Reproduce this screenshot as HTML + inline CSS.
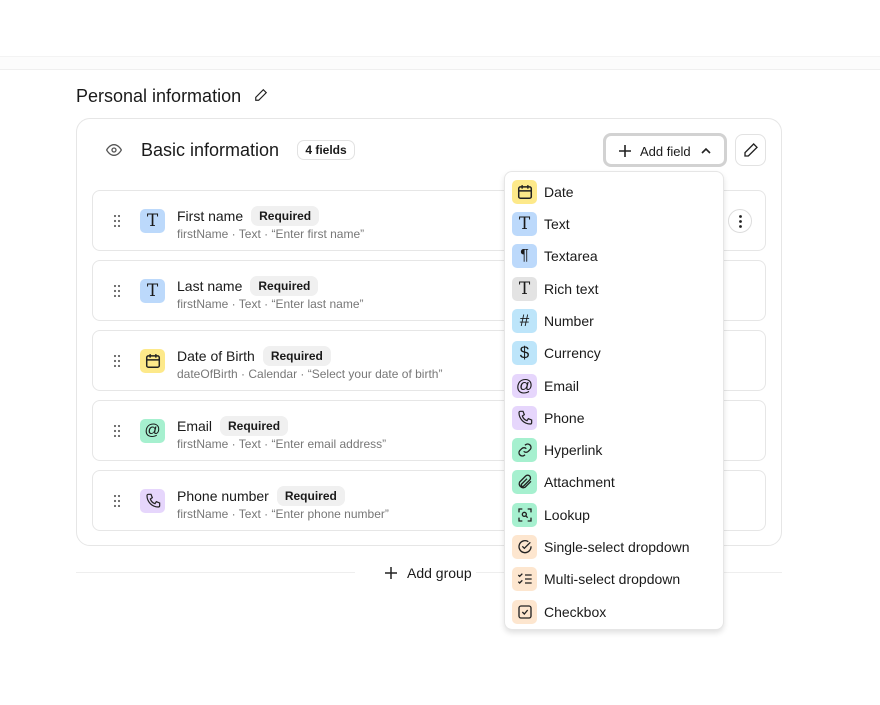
<!DOCTYPE html>
<html><head><meta charset="utf-8"><style>
*{box-sizing:border-box;margin:0;padding:0}
body{width:880px;height:705px;background:#fff;font-family:"Liberation Sans",sans-serif;color:#1a1a1a;position:relative;overflow:hidden}
.a{position:absolute}
.band{left:0;top:56px;width:880px;height:14px;background:#fcfcfc;border-top:1px solid #f3f3f3;border-bottom:1px solid #efefef}
.card{left:76px;top:118px;width:706px;height:428px;border:1px solid #e6e6e6;border-radius:14px}
.row{left:92px;width:674px;height:61px;border:1px solid #e6e6e6;border-radius:8px;background:#fff}
.dots{left:21px;top:24px;width:6px;height:12px}
.ic{width:25px;height:24px;border-radius:5px;display:flex;align-items:center;justify-content:center}
.row .ic{position:absolute;left:47px;top:18px}
.t{position:absolute;left:84px;top:15px;font-size:14px;display:flex;align-items:center}
.req{margin-left:8px;background:#f0f0f0;border-radius:7px;font-size:12px;font-weight:bold;padding:3px 8px}
.s{position:absolute;left:84px;top:36px;font-size:12px;color:#777}
.menu{left:504px;top:171px;width:220px;height:459px;background:#fff;border:1px solid #e6e6e6;border-radius:8px;box-shadow:0 3px 6px rgba(0,0,0,.12)}
.mi{position:absolute;left:7px;height:25px;display:flex;align-items:center;font-size:14px}
.mi .ic{margin-right:7px}
.y{background:#fde98a}.b{background:#bcd9fb}.g{background:#e3e3e3}.c{background:#bde5fa}.p{background:#e6d6fc}.gr{background:#a6f0cf}.o{background:#fde6cf}
.T{font-family:"DejaVu Serif",serif;font-size:17px;font-weight:normal}
svg{display:block}
</style></head><body>
<div class="a band"></div>
<div class="a" style="left:76px;top:86px;font-size:18px">Personal information</div>
<svg class="a" style="left:254px;top:88px" width="14" height="14" viewBox="0 0 24 24" fill="none" stroke="#222" stroke-width="2"><path d="M16 3l5 5L8 21H3v-5z"/></svg>
<div class="a card"></div>
<svg class="a" style="left:106px;top:143px" width="16" height="14" viewBox="0 0 24 20" fill="none" stroke="#555" stroke-width="2"><path d="M1 10s4-8 11-8 11 8 11 8-4 8-11 8S1 10 1 10z"/><circle cx="12" cy="10" r="3"/></svg>
<div class="a" style="left:141px;top:140px;font-size:18px">Basic information</div>
<div class="a" style="left:297px;top:140px;width:58px;height:20px;border:1px solid #e2e2e2;border-radius:7px;font-size:12px;font-weight:bold;text-align:center;line-height:18px">4 fields</div>
<div class="a" style="left:603px;top:133px;width:124px;height:34px;border:3px solid #d2d2d2;border-radius:8px;background:#fff;font-size:13px">
<svg class="a" style="left:12px;top:8px" width="14" height="14" viewBox="0 0 14 14" stroke="#222" stroke-width="1.6"><path d="M7 1v12M1 7h12"/></svg>
<span class="a" style="left:34px;top:8px">Add field</span>
<svg class="a" style="left:94px;top:10px" width="12" height="10" viewBox="0 0 12 10" fill="none" stroke="#222" stroke-width="1.6"><path d="M2 7l4-4 4 4"/></svg></div>
<div class="a" style="left:735px;top:134px;width:31px;height:32px;border:1px solid #e2e2e2;border-radius:8px">
<svg class="a" style="left:7px;top:7px" width="16" height="16" viewBox="0 0 24 24" fill="none" stroke="#222" stroke-width="2"><path d="M16 3l5 5L8 21H3v-5z"/></svg></div>

<div class="a row" style="top:190px">
<svg class="a dots" viewBox="0 0 6 12" fill="#666"><circle cx="1" cy="1" r="1.1"/><circle cx="5" cy="1" r="1.1"/><circle cx="1" cy="6" r="1.1"/><circle cx="5" cy="6" r="1.1"/><circle cx="1" cy="11" r="1.1"/><circle cx="5" cy="11" r="1.1"/></svg>
<div class="ic b"><span class="T">T</span></div>
<div class="t">First name<span class="req">Required</span></div><div class="s">firstName · Text · “Enter first name”</div>
<div class="a" style="left:635px;top:18px;width:24px;height:24px;border:1px solid #ddd;border-radius:12px"><svg class="a" style="left:10px;top:5px" width="3" height="13" viewBox="0 0 3 13" fill="#222"><circle cx="1.5" cy="1.5" r="1.4"/><circle cx="1.5" cy="6.5" r="1.4"/><circle cx="1.5" cy="11.5" r="1.4"/></svg></div>
</div>
<div class="a row" style="top:260px">
<svg class="a dots" viewBox="0 0 6 12" fill="#666"><circle cx="1" cy="1" r="1.1"/><circle cx="5" cy="1" r="1.1"/><circle cx="1" cy="6" r="1.1"/><circle cx="5" cy="6" r="1.1"/><circle cx="1" cy="11" r="1.1"/><circle cx="5" cy="11" r="1.1"/></svg>
<div class="ic b"><span class="T">T</span></div>
<div class="t">Last name<span class="req">Required</span></div><div class="s">firstName · Text · “Enter last name”</div></div>
<div class="a row" style="top:330px">
<svg class="a dots" viewBox="0 0 6 12" fill="#666"><circle cx="1" cy="1" r="1.1"/><circle cx="5" cy="1" r="1.1"/><circle cx="1" cy="6" r="1.1"/><circle cx="5" cy="6" r="1.1"/><circle cx="1" cy="11" r="1.1"/><circle cx="5" cy="11" r="1.1"/></svg>
<div class="ic y"><svg width="16" height="16" viewBox="0 0 14 14" fill="none" stroke="#222" stroke-width="1.3"><rect x="1.5" y="2.5" width="11" height="10" rx="1.5"/><path d="M1.5 6h11M4.5 1v3M9.5 1v3"/></svg></div>
<div class="t">Date of Birth<span class="req">Required</span></div><div class="s">dateOfBirth · Calendar · “Select your date of birth”</div></div>
<div class="a row" style="top:400px">
<svg class="a dots" viewBox="0 0 6 12" fill="#666"><circle cx="1" cy="1" r="1.1"/><circle cx="5" cy="1" r="1.1"/><circle cx="1" cy="6" r="1.1"/><circle cx="5" cy="6" r="1.1"/><circle cx="1" cy="11" r="1.1"/><circle cx="5" cy="11" r="1.1"/></svg>
<div class="ic gr"><span style="font-size:16px">@</span></div>
<div class="t">Email<span class="req">Required</span></div><div class="s">firstName · Text · “Enter email address”</div></div>
<div class="a row" style="top:470px">
<svg class="a dots" viewBox="0 0 6 12" fill="#666"><circle cx="1" cy="1" r="1.1"/><circle cx="5" cy="1" r="1.1"/><circle cx="1" cy="6" r="1.1"/><circle cx="5" cy="6" r="1.1"/><circle cx="1" cy="11" r="1.1"/><circle cx="5" cy="11" r="1.1"/></svg>
<div class="ic p"><svg width="16" height="16" viewBox="0 0 24 24" fill="none" stroke="#222" stroke-width="1.8"><path d="M5 2h4l2 5-3 2a11 11 0 0 0 7 7l2-3 5 2v4a2 2 0 0 1-2 2A17 17 0 0 1 3 4a2 2 0 0 1 2-2z"/></svg></div>
<div class="t">Phone number<span class="req">Required</span></div><div class="s">firstName · Text · “Enter phone number”</div></div>

<div class="a" style="left:76px;top:572px;width:279px;height:1px;background:#eee"></div>
<div class="a" style="left:476px;top:572px;width:306px;height:1px;background:#eee"></div>
<svg class="a" style="left:385px;top:567px" width="12" height="12" viewBox="0 0 12 12" stroke="#222" stroke-width="1.5"><path d="M6 0v12M0 6h12"/></svg>
<div class="a" style="left:407px;top:565px;font-size:14px">Add group</div>

<div class="a menu">
<div class="mi" style="top:7px"><div class="ic y"><svg width="16" height="16" viewBox="0 0 14 14" fill="none" stroke="#222" stroke-width="1.3"><rect x="1.5" y="2.5" width="11" height="10" rx="1.5"/><path d="M1.5 6h11M4.5 1v3M9.5 1v3"/></svg></div>Date</div>
<div class="mi" style="top:39px"><div class="ic b"><span class="T">T</span></div>Text</div>
<div class="mi" style="top:71px"><div class="ic b"><span style="font-size:16px">¶</span></div>Textarea</div>
<div class="mi" style="top:104px"><div class="ic g"><span class="T">T</span></div>Rich text</div>
<div class="mi" style="top:136px"><div class="ic c"><span style="font-size:17px">#</span></div>Number</div>
<div class="mi" style="top:168px"><div class="ic c"><span style="font-size:17px">$</span></div>Currency</div>
<div class="mi" style="top:201px"><div class="ic p"><span style="font-size:17px">@</span></div>Email</div>
<div class="mi" style="top:233px"><div class="ic p"><svg width="16" height="16" viewBox="0 0 24 24" fill="none" stroke="#222" stroke-width="1.8"><path d="M5 2h4l2 5-3 2a11 11 0 0 0 7 7l2-3 5 2v4a2 2 0 0 1-2 2A17 17 0 0 1 3 4a2 2 0 0 1 2-2z"/></svg></div>Phone</div>
<div class="mi" style="top:265px"><div class="ic gr"><svg width="16" height="16" viewBox="0 0 24 24" fill="none" stroke="#222" stroke-width="2"><path d="M10 14a5 5 0 0 0 7 0l3-3a5 5 0 0 0-7-7l-1 1"/><path d="M14 10a5 5 0 0 0-7 0l-3 3a5 5 0 0 0 7 7l1-1"/></svg></div>Hyperlink</div>
<div class="mi" style="top:297px"><div class="ic gr"><svg width="16" height="16" viewBox="0 0 24 24" fill="none" stroke="#222" stroke-width="2"><path d="M21 11l-9 9a6 6 0 0 1-8-8l9-9a4 4 0 0 1 6 6l-9 9a2 2 0 0 1-3-3l8-8"/></svg></div>Attachment</div>
<div class="mi" style="top:330px"><div class="ic gr"><svg width="16" height="16" viewBox="0 0 24 24" fill="none" stroke="#222" stroke-width="2"><path d="M3 8V3h5M16 3h5v5M21 16v5h-5M8 21H3v-5"/><circle cx="11" cy="11" r="3"/><path d="M13 13l3 3"/></svg></div>Lookup</div>
<div class="mi" style="top:362px"><div class="ic o"><svg width="16" height="16" viewBox="0 0 24 24" fill="none" stroke="#222" stroke-width="2"><path d="M21 11a9 9 0 1 1-4-7"/><path d="M8 11l3 3 9-9"/></svg></div>Single-select dropdown</div>
<div class="mi" style="top:394px"><div class="ic o"><svg width="16" height="16" viewBox="0 0 24 24" fill="none" stroke="#222" stroke-width="2"><path d="M2 6l2 2 4-4M2 16l2 2 4-4M12 6h10M12 12h10M12 18h10"/></svg></div>Multi-select dropdown</div>
<div class="mi" style="top:427px"><div class="ic o"><svg width="16" height="16" viewBox="0 0 24 24" fill="none" stroke="#222" stroke-width="2"><rect x="3" y="3" width="18" height="18" rx="3"/><path d="M8 12l3 3 5-6"/></svg></div>Checkbox</div>
</div>
</body></html>
